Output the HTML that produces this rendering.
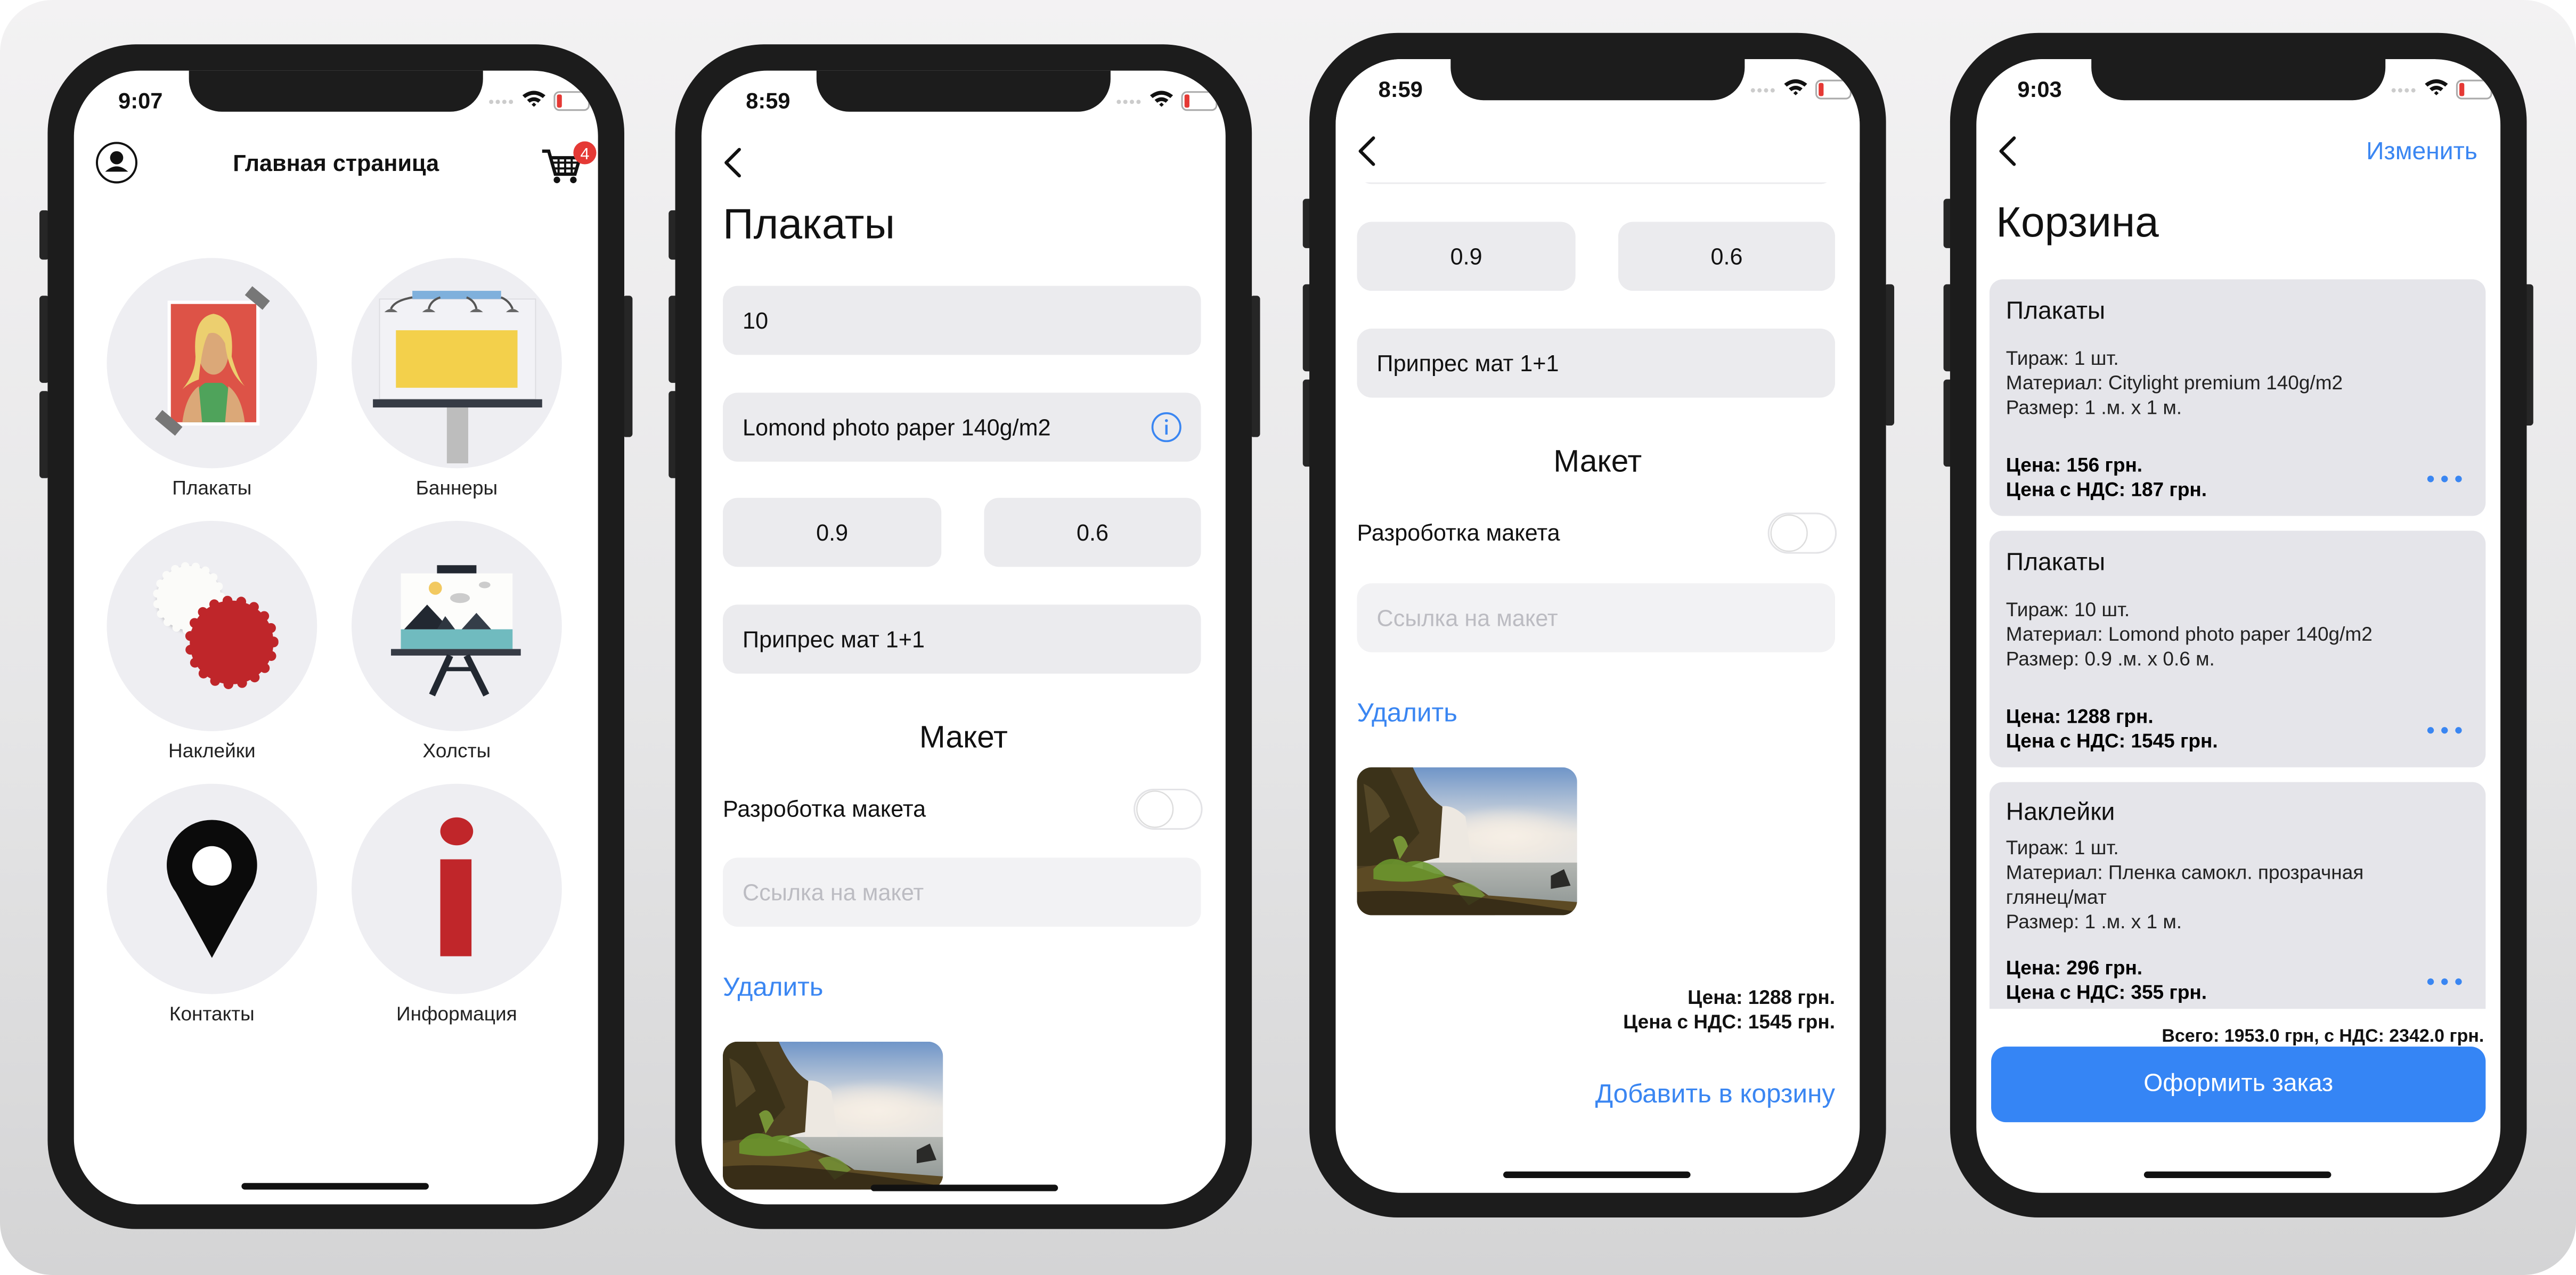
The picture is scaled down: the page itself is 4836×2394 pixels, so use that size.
<!DOCTYPE html>
<html><head><meta charset="utf-8"><style>
*{margin:0;padding:0;box-sizing:border-box}
html,body{width:4836px;height:2394px;overflow:hidden;background:#fff}
#stage{position:absolute;left:0;top:0;width:1568px;height:776px;transform:scale(3.08418,3.08505);transform-origin:0 0;font-family:"Liberation Sans","DejaVu Sans",sans-serif;color:#111}
.bg{position:absolute;left:0;top:0;width:1568px;height:776px;border-radius:32px;background:linear-gradient(#f3f2f3,#e6e6e7 55%,#d4d4d5)}
.ph{position:absolute;width:351px;height:721px;border-radius:54px;background:#1c1c1c}
.btn{position:absolute;background:#262626;border-radius:2px}
.scr{position:absolute;left:16px;top:16px;width:319px;height:690px;border-radius:40px;background:#fff;overflow:hidden}
.notch{position:absolute;left:70px;top:-2px;width:179px;height:27px;background:#1c1c1c;border-radius:0 0 20px 20px}
.home{position:absolute;left:102px;top:677px;width:114px;height:4px;border-radius:2px;background:#111}
.t{position:absolute;white-space:nowrap;line-height:16px}
.time{position:absolute;top:11px;font-weight:bold;font-size:13.5px;line-height:16px}
.st{position:absolute;left:252px;top:11px}
.f{position:absolute;background:#ebebee;border-radius:9px;font-size:14px;line-height:42px;padding-left:12px}
.fc{text-align:center;padding-left:0}
.lbl{position:absolute;font-size:12px;text-align:center;width:140px;line-height:14px;color:#222}
.circ{position:absolute;width:128px;height:128px;border-radius:50%;background:#eeeef2}
.card{position:absolute;left:8px;width:302px;background:#e5e5ea;border-radius:8px}
.card .t{left:10px;font-size:12px;color:#222}
.card .h{font-size:15px;color:#111}
.card .b{font-weight:bold;color:#000}
.dots{position:absolute;right:14px;width:22px;height:5px}
.blue{color:#3a86f2}
</style></head><body><div id="stage">
<div class="bg"></div>

<svg width="0" height="0" style="position:absolute">
<defs>
<g id="status">
<circle cx="2" cy="8" r="1.3" fill="#ccc"/><circle cx="6" cy="8" r="1.3" fill="#ccc"/><circle cx="10" cy="8" r="1.3" fill="#ccc"/><circle cx="14" cy="8" r="1.3" fill="#ccc"/>
<path d="M21 4 Q28 -1.5 35 4 L33.4 5.7 Q28 1.6 22.6 5.7Z M23.8 6.8 Q28 3.6 32.2 6.8 L30.6 8.5 Q28 6.6 25.4 8.5Z M26.6 9.7 L28 8.4 L29.4 9.7 L28 11Z" fill="#111"/>
<rect x="40.5" y="2" width="21" height="11" rx="3" fill="none" stroke="#aaa" stroke-width="1"/>
<rect x="42" y="3.5" width="3" height="8" rx="1" fill="#e53935"/>
<rect x="62.5" y="5.5" width="1.5" height="4" rx=".7" fill="#aaa"/>
</g>
<linearGradient id="sky" x1="0" y1="0" x2="0" y2="1"><stop offset="0" stop-color="#6f95c8"/><stop offset="0.45" stop-color="#e8e6e2"/></linearGradient>
<linearGradient id="water" x1="0" y1="0" x2="0" y2="1"><stop offset="0" stop-color="#b3b6b2"/><stop offset="1" stop-color="#8b9391"/></linearGradient>
<radialGradient id="mist" cx="0.5" cy="0.5" r="0.5"><stop offset="0" stop-color="#f6efe6"/><stop offset="1" stop-color="#f0e8de" stop-opacity="0"/></radialGradient>
<g id="wf">
<rect width="134" height="90" fill="url(#sky)"/>
<rect x="40" y="25" width="94" height="35" fill="url(#mist)"/>
<ellipse cx="95" cy="42" rx="50" ry="20" fill="url(#mist)"/>
<path d="M50 24 Q58 22 66 30 L70 58 L50 60Z" fill="#ede8e1"/>
<rect x="40" y="58" width="94" height="32" fill="url(#water)"/>
<path d="M0 0 H34 Q42 18 52 24 L50 55 Q34 58 28 64 Q58 62 80 78 L84 90 H0Z" fill="#4d3f22"/>
<path d="M0 0 H20 Q30 20 38 40 L20 60 L0 60Z" fill="#3b3219"/>
<path d="M4 10 Q14 14 20 30 L8 40Z" fill="#5b4c2a" opacity=".8"/>
<path d="M0 62 Q20 56 40 62 Q62 70 80 78 L134 82 L134 90 H0Z" fill="#5c4a24"/>
<path d="M10 62 Q18 52 30 58 Q42 54 54 66 Q32 72 10 68Z" fill="#6c9a2e" opacity=".85"/>
<path d="M22 44 Q28 38 31 48 L26 56Z" fill="#86ad3d" opacity=".8"/>
<path d="M58 72 Q68 66 78 78 L68 84Z" fill="#7aa33a" opacity=".7"/>
<path d="M0 76 Q40 72 134 88 V90 H0Z" fill="#2f2614" opacity=".8"/>
<path d="M118 66 L126 62 L130 72 L118 74Z" fill="#2a2a28"/>
</g>
<g id="chev"><path d="M10 1 L2 9 L10 17" fill="none" stroke="#111" stroke-width="2" stroke-linecap="round" stroke-linejoin="round"/></g>
<g id="tog"><rect x="0.5" y="0.5" width="41" height="24" rx="12" fill="#fff" stroke="#e3e3e6"/><circle cx="13" cy="12.5" r="11" fill="#fff" stroke="#ddd" stroke-width=".8"/></g>
<g id="dt"><circle cx="2.5" cy="2.5" r="2" fill="#3a86f2"/><circle cx="11" cy="2.5" r="2" fill="#3a86f2"/><circle cx="19.5" cy="2.5" r="2" fill="#3a86f2"/></g>
</defs></svg>

<!-- PHONE 1 -->
<div class="btn" style="left:24px;top:128px;width:6px;height:30px"></div>
<div class="btn" style="left:24px;top:180px;width:6px;height:53px"></div>
<div class="btn" style="left:24px;top:238px;width:6px;height:53px"></div>
<div class="btn" style="left:379px;top:180px;width:6px;height:86px"></div>
<div class="ph" style="left:29px;top:27px">
<div class="scr">
 <div class="notch"></div>
 <div class="time" style="left:27px">9:07</div>
 <svg class="st" width="66" height="15"><use href="#status"/></svg>
 <svg style="position:absolute;left:13px;top:43px" width="26" height="26" viewBox="0 0 26 26"><circle cx="13" cy="13" r="12" fill="none" stroke="#111" stroke-width="1.3"/><circle cx="13" cy="10" r="4" fill="#111"/><path d="M6 18.5 Q13 12 20 18.5 Z" fill="#111"/></svg>
 <div class="t" style="left:0;width:319px;text-align:center;top:48px;font-weight:bold;font-size:14px">Главная страница</div>
 <svg style="position:absolute;left:283px;top:43px" width="36" height="28" viewBox="0 0 36 28"><path d="M2 6 H6 L10 20 H22 L25 10 H7" fill="none" stroke="#111" stroke-width="2"/><path d="M8 13 H24 M9 16.5 H23 M12 10 V20 M16 10 V20 M20 10 V20" stroke="#111" stroke-width="1.3"/><circle cx="11" cy="23.5" r="2" fill="#111"/><circle cx="21" cy="23.5" r="2" fill="#111"/><circle cx="28" cy="7" r="7" fill="#e53935"/><text x="28" y="11" font-size="10" fill="#fff" text-anchor="middle" font-family="Liberation Sans">4</text></svg>

 <div class="circ" style="left:20px;top:114px"><svg width="128" height="128" viewBox="0 0 128 128">
  <rect x="37" y="26" width="56" height="76" fill="#fff"/><rect x="39" y="28" width="52" height="72" fill="#dd5347"/>
  <path d="M50 100 Q52 80 60 76 L70 76 Q78 80 80 100Z" fill="#4fa35b"/>
  <path d="M46 100 Q48 84 56 78 L58 100Z M84 100 Q82 84 74 78 L72 100Z" fill="#dba878"/>
  <ellipse cx="65" cy="58" rx="9" ry="13" fill="#dba878"/>
  <path d="M54 60 Q52 36 65 34 Q78 36 76 60 Q80 74 84 78 Q74 70 72 52 Q68 44 62 46 Q58 52 56 74 Q50 76 46 80 Q54 70 54 60Z" fill="#eccf6f"/>
  <rect x="85" y="21" width="14" height="7" fill="#777" transform="rotate(40 92 24)"/>
  <rect x="30" y="97" width="16" height="7" fill="#777" transform="rotate(40 38 100)"/>
 </svg></div>
 <div class="circ" style="left:169px;top:114px"><svg width="128" height="128" viewBox="0 0 128 128">
  <rect x="58" y="91" width="13" height="34" fill="#bdbdbd"/>
  <rect x="17" y="25" width="95" height="61" fill="#f2f2f6" stroke="#dcdce0" stroke-width=".6"/>
  <rect x="27" y="44" width="74" height="35" fill="#f3d04b"/>
  <rect x="13" y="86" width="103" height="5" fill="#363b45"/>
  <rect x="37" y="20" width="54" height="5" fill="#7fb0dc"/>
  <path d="M24 31 Q26 26 37 24 M47 31 Q48 26 54 24 M76 31 Q75 26 70 24 M98 31 Q96 26 91 24" stroke="#555" stroke-width="1.3" fill="none"/>
  <path d="M20 33 Q24 29 28 33Z M43 33 Q47 29 51 33Z M72 33 Q76 29 80 33Z M94 33 Q98 29 102 33Z" fill="#666"/>
 </svg></div>
 <div class="circ" style="left:20px;top:274px"><svg width="128" height="128" viewBox="0 0 128 128">
  <circle cx="50" cy="47" r="19.5" fill="#fbfbf9" filter="drop-shadow(0 1px 1px rgba(0,0,0,.2))"/>
  <circle cx="50" cy="47" r="19.5" fill="none" stroke="#fbfbf9" stroke-width="5" stroke-dasharray="0 6.4" stroke-linecap="round"/>
  <circle cx="76" cy="74" r="25.5" fill="#bf262a"/>
  <circle cx="76" cy="74" r="25.5" fill="none" stroke="#bf262a" stroke-width="6" stroke-dasharray="0 8.4" stroke-linecap="round"/>
 </svg></div>
 <div class="circ" style="left:169px;top:274px"><svg width="128" height="128" viewBox="0 0 128 128">
  <rect x="52" y="27" width="24" height="5" fill="#222831"/>
  <rect x="30" y="32" width="68" height="46" fill="#fdfdfb"/>
  <rect x="30" y="66" width="68" height="12" fill="#70bbbf"/>
  <circle cx="51" cy="41" r="4" fill="#f2c960"/>
  <ellipse cx="66" cy="47" rx="6" ry="3" fill="#ccc"/><ellipse cx="81" cy="39" rx="3.5" ry="2" fill="#ccc"/>
  <path d="M32 66 L46 51 L60 66Z" fill="#222831"/><path d="M52 66 L57 58 L63 66Z" fill="#2e3640"/><path d="M67 66 L76 56 L85 66Z" fill="#353e49"/>
  <rect x="24" y="78" width="79" height="4" fill="#363b45"/>
  <path d="M60 82 L49 106 M70 82 L82 106" stroke="#222831" stroke-width="4"/>
  <rect x="55" y="89" width="20" height="2.5" fill="#222831"/>
 </svg></div>
 <div class="circ" style="left:20px;top:434px"><svg width="128" height="128" viewBox="0 0 128 128">
  <path d="M64 106 L42 66 A27.5 27.5 0 1 1 86 66Z" fill="#0b0b0b"/>
  <circle cx="64" cy="50" r="12" fill="#fff"/>
 </svg></div>
 <div class="circ" style="left:169px;top:434px"><svg width="128" height="128" viewBox="0 0 128 128">
  <ellipse cx="64" cy="29" rx="10" ry="8.5" fill="#c0262a"/>
  <rect x="54" y="46" width="19" height="59" fill="#c0262a"/>
 </svg></div>
 <div class="lbl" style="left:14px;top:247px">Плакаты</div>
 <div class="lbl" style="left:163px;top:247px">Баннеры</div>
 <div class="lbl" style="left:14px;top:407px">Наклейки</div>
 <div class="lbl" style="left:163px;top:407px">Холсты</div>
 <div class="lbl" style="left:14px;top:567px">Контакты</div>
 <div class="lbl" style="left:163px;top:567px">Информация</div>
 <div class="home"></div>
</div></div>

<!-- PHONE 2 -->
<div class="btn" style="left:407px;top:128px;width:6px;height:30px"></div>
<div class="btn" style="left:407px;top:180px;width:6px;height:53px"></div>
<div class="btn" style="left:407px;top:238px;width:6px;height:53px"></div>
<div class="btn" style="left:761px;top:180px;width:6px;height:86px"></div>
<div class="ph" style="left:411px;top:27px">
<div class="scr">
 <div class="notch"></div>
 <div class="time" style="left:27px">8:59</div>
 <svg class="st" width="66" height="15"><use href="#status"/></svg>
 <svg style="position:absolute;left:13px;top:47px" width="14" height="20"><use href="#chev"/></svg>
 <div class="t" style="left:13px;top:78px;font-size:26px;line-height:30px">Плакаты</div>
 <div class="f" style="left:13px;top:131px;width:291px">10</div>
 <div class="f" style="left:13px;top:196px;width:291px">Lomond photo paper 140g/m2</div>
 <svg style="position:absolute;left:273px;top:207px" width="20" height="20"><circle cx="10" cy="10" r="8.5" fill="none" stroke="#3a86f2" stroke-width="1.2"/><rect x="9.3" y="8.5" width="1.4" height="6" fill="#3a86f2"/><circle cx="10" cy="6" r=".9" fill="#3a86f2"/></svg>
 <div class="f fc" style="left:13px;top:260px;width:133px">0.9</div>
 <div class="f fc" style="left:172px;top:260px;width:132px">0.6</div>
 <div class="f" style="left:13px;top:325px;width:291px">Припрес мат 1+1</div>
 <div class="t" style="left:0;width:319px;text-align:center;top:396px;font-size:19px;line-height:22px">Макет</div>
 <div class="t" style="left:13px;top:441px;font-size:14px">Разроботка макета</div>
 <svg style="position:absolute;left:263px;top:437px" width="43" height="26"><use href="#tog"/></svg>
 <div class="f" style="left:13px;top:479px;width:291px;background:#f2f2f4;color:#bcbcc2">Ссылка на макет</div>
 <div class="t blue" style="left:13px;top:550px;font-size:16px;line-height:18px">Удалить</div>
 <svg style="position:absolute;left:13px;top:591px;border-radius:9px" width="134" height="90"><use href="#wf"/></svg>
 <div class="home" style="left:103px;top:678px"></div>
</div></div>

<!-- PHONE 3 -->
<div class="btn" style="left:793px;top:121px;width:6px;height:30px"></div>
<div class="btn" style="left:793px;top:173px;width:6px;height:53px"></div>
<div class="btn" style="left:793px;top:231px;width:6px;height:53px"></div>
<div class="btn" style="left:1147px;top:173px;width:6px;height:86px"></div>
<div class="ph" style="left:797px;top:20px">
<div class="scr">
 <div class="f" style="left:13px;top:34px;width:291px;height:42px"></div>
 <div style="position:absolute;left:0;top:0;width:319px;height:75px;background:#fff"></div>
 <div class="notch"></div>
 <div class="time" style="left:26px">8:59</div>
 <svg class="st" width="66" height="15"><use href="#status"/></svg>
 <svg style="position:absolute;left:13px;top:47px" width="14" height="20"><use href="#chev"/></svg>
 <div class="f fc" style="left:13px;top:99px;width:133px">0.9</div>
 <div class="f fc" style="left:172px;top:99px;width:132px">0.6</div>
 <div class="f" style="left:13px;top:164px;width:291px">Припрес мат 1+1</div>
 <div class="t" style="left:0;width:319px;text-align:center;top:235px;font-size:19px;line-height:22px">Макет</div>
 <div class="t" style="left:13px;top:280px;font-size:14px">Разроботка макета</div>
 <svg style="position:absolute;left:263px;top:276px" width="43" height="26"><use href="#tog"/></svg>
 <div class="f" style="left:13px;top:319px;width:291px;background:#f2f2f4;color:#bcbcc2">Ссылка на макет</div>
 <div class="t blue" style="left:13px;top:390px;font-size:16px;line-height:18px">Удалить</div>
 <svg style="position:absolute;left:13px;top:431px;border-radius:9px" width="134" height="90"><use href="#wf"/></svg>
 <div class="t" style="right:15px;top:564px;font-size:12px;font-weight:bold;text-align:right;line-height:15px">Цена: 1288 грн.<br>Цена с НДС: 1545 грн.</div>
 <div class="t blue" style="right:15px;top:622px;font-size:16px;line-height:18px">Добавить в корзину</div>
 <div class="home"></div>
</div></div>

<!-- PHONE 4 -->
<div class="btn" style="left:1183px;top:121px;width:6px;height:30px"></div>
<div class="btn" style="left:1183px;top:173px;width:6px;height:53px"></div>
<div class="btn" style="left:1183px;top:231px;width:6px;height:53px"></div>
<div class="btn" style="left:1536px;top:173px;width:6px;height:86px"></div>
<div class="ph" style="left:1187px;top:20px">
<div class="scr">
 <div class="notch"></div>
 <div class="time" style="left:25px">9:03</div>
 <svg class="st" width="66" height="15"><use href="#status"/></svg>
 <svg style="position:absolute;left:13px;top:47px" width="14" height="20"><use href="#chev"/></svg>
 <div class="t blue" style="right:14px;top:48px;font-size:15px;line-height:18px">Изменить</div>
 <div class="t" style="left:12px;top:84px;font-size:26px;line-height:30px">Корзина</div>

 <div class="card" style="top:134px;height:144px">
  <div class="t h" style="top:12px">Плакаты</div>
  <div class="t" style="top:40px">Тираж: 1 шт.</div>
  <div class="t" style="top:55px">Материал: Citylight premium 140g/m2</div>
  <div class="t" style="top:70px">Размер: 1 .м. x 1 м.</div>
  <div class="t b" style="top:105px">Цена: 156 грн.</div>
  <div class="t b" style="top:120px">Цена с НДС: 187 грн.</div>
  <svg class="dots" style="top:119px"><use href="#dt"/></svg>
 </div>
 <div class="card" style="top:287px;height:144px">
  <div class="t h" style="top:12px">Плакаты</div>
  <div class="t" style="top:40px">Тираж: 10 шт.</div>
  <div class="t" style="top:55px">Материал: Lomond photo paper 140g/m2</div>
  <div class="t" style="top:70px">Размер: 0.9 .м. x 0.6 м.</div>
  <div class="t b" style="top:105px">Цена: 1288 грн.</div>
  <div class="t b" style="top:120px">Цена с НДС: 1545 грн.</div>
  <svg class="dots" style="top:119px"><use href="#dt"/></svg>
 </div>
 <div class="card" style="top:440px;height:138px;border-radius:8px 8px 0 0">
  <div class="t h" style="top:11px">Наклейки</div>
  <div class="t" style="top:32px">Тираж: 1 шт.</div>
  <div class="t" style="top:47px">Материал: Пленка самокл. прозрачная</div>
  <div class="t" style="top:62px">глянец/мат</div>
  <div class="t" style="top:77px">Размер: 1 .м. x 1 м.</div>
  <div class="t b" style="top:105px">Цена: 296 грн.</div>
  <div class="t b" style="top:120px">Цена с НДС: 355 грн.</div>
  <svg class="dots" style="top:119px"><use href="#dt"/></svg>
 </div>
 <div class="t" style="right:10px;top:587px;font-size:11px;font-weight:bold">Всего: 1953.0 грн, с НДС: 2342.0 грн.</div>
 <div style="position:absolute;left:9px;top:601px;width:301px;height:46px;border-radius:9px;background:#3585f5;color:#fff;font-size:15px;line-height:46px;text-align:center">Оформить заказ</div>
 <div class="home"></div>
</div></div>

</div></body></html>
